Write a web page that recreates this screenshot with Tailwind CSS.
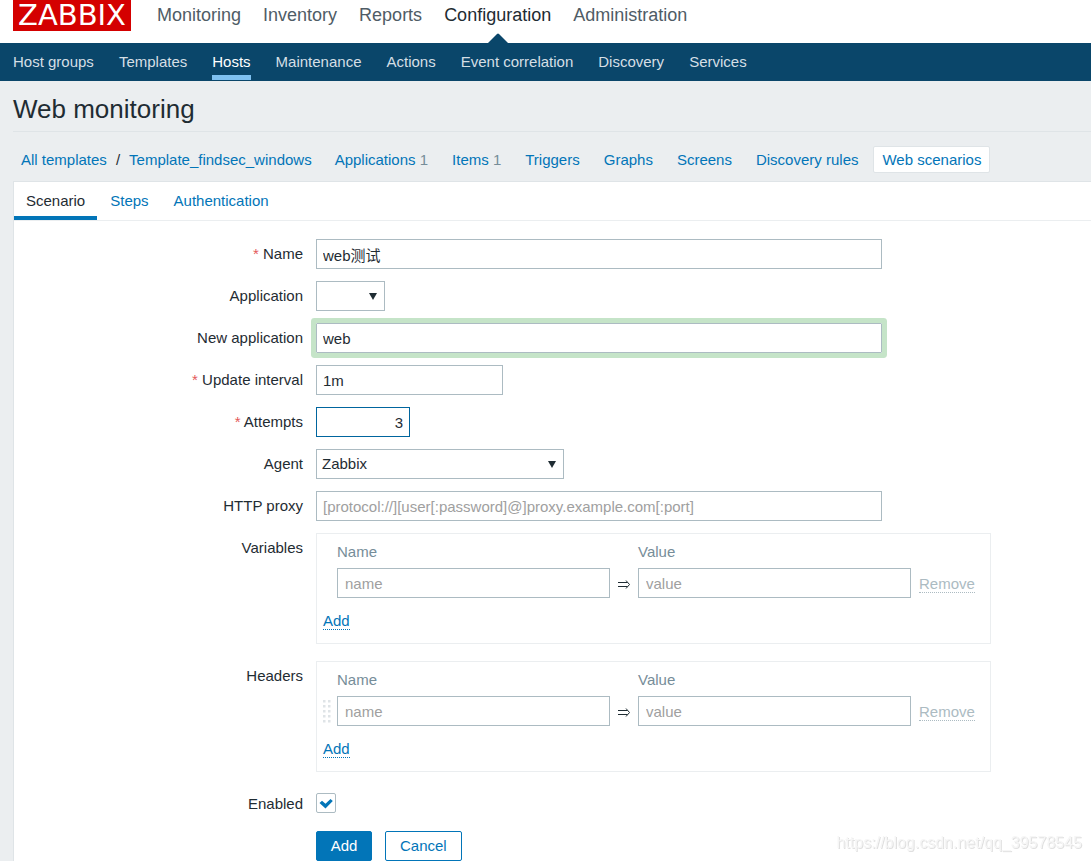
<!DOCTYPE html>
<html lang="en">
<head>
<meta charset="utf-8">
<meta name="viewport" content="width=device-width, initial-scale=1">
<title>Web monitoring</title>
<script src="https://cdn.jsdelivr.net/npm/@tailwindcss/browser@4"></script>
</head>
<body class="flex min-h-screen flex-col bg-[#ebeef0] font-['Liberation_Sans','Noto_Sans_CJK_SC',sans-serif] text-[15px] leading-[18px] text-[#1f2c33]">

<header>
  <div class="flex h-[43px] items-start bg-white pl-[13px]">
    <a href="#" class="flex h-[31px] w-[118px] items-center justify-center bg-[#d40000] font-['DejaVu_Sans',sans-serif] text-[29px] leading-[31px] text-white">ZABBIX</a>
    <nav aria-label="Main" class="ml-[26px] flex h-full gap-[22px] pt-1 text-[18px] leading-[22px] text-[#4f5c66]">
      <a href="#">Monitoring</a>
      <a href="#">Inventory</a>
      <a href="#">Reports</a>
      <a href="#" aria-current="page" class="relative text-[#1f2c33]">Configuration
        <svg class="absolute bottom-0 left-1/2 h-[10px] w-5 -translate-x-1/2" viewBox="0 0 20 10" aria-hidden="true"><path d="M0 10 9 1Q10 0 11 1L20 10Z" fill="#0a466a"/></svg>
      </a>
      <a href="#">Administration</a>
    </nav>
  </div>
  <nav aria-label="Configuration" class="flex h-[38px] items-stretch gap-[25px] bg-[#0a466a] px-[13px] leading-[38px] text-[#d5dfe5]">
    <a href="#">Host groups</a>
    <a href="#">Templates</a>
    <a href="#" aria-current="page" class="relative text-white">Hosts<span class="absolute inset-x-0 bottom-[1px] h-[5px] bg-[#7ec1f1]"></span></a>
    <a href="#">Maintenance</a>
    <a href="#">Actions</a>
    <a href="#">Event correlation</a>
    <a href="#">Discovery</a>
    <a href="#">Services</a>
  </nav>
</header>

<main class="flex grow flex-col pl-[13px]">
  <h1 class="border-b border-[#dfe4e7] pt-3 pb-[6px] text-[26px] leading-[32px]">Web monitoring</h1>

  <nav aria-label="Template" class="mt-[14px] mb-2 flex items-center gap-[6px] leading-[19px] text-[#0275b8]">
    <a href="#" class="pl-2">All templates</a>
    <span class="px-[3px] text-[#1f2c33]">/</span>
    <a href="#" class="pr-2">Template_findsec_windows</a>
    <a href="#" class="px-[9px]">Applications <span class="text-[#768d99]">1</span></a>
    <a href="#" class="px-[9px]">Items <span class="text-[#768d99]">1</span></a>
    <a href="#" class="px-[9px]">Triggers</a>
    <a href="#" class="px-[9px]">Graphs</a>
    <a href="#" class="px-[9px]">Screens</a>
    <a href="#" class="px-[9px]">Discovery rules</a>
    <a href="#" aria-current="page" class="rounded-xs border border-[#dfe4e7] bg-white px-2 py-[3px]">Web scenarios</a>
  </nav>

  <section class="grow border-t border-l border-[#dfe4e7] bg-white">
    <div role="tablist" class="flex h-[39px] gap-px border-b border-[#ebeef0] text-[#0275b8]">
      <button type="button" role="tab" aria-selected="true" class="border-b-4 border-[#0275b8] px-3 pt-1 text-[#1f2c33]">Scenario</button>
      <button type="button" role="tab" aria-selected="false" class="border-b-4 border-transparent px-3 pt-1">Steps</button>
      <button type="button" role="tab" aria-selected="false" class="border-b-4 border-transparent px-3 pt-1">Authentication</button>
    </div>

    <form class="grid grid-cols-[289px_1fr] gap-x-[13px] gap-y-3 pt-[18px]">
      <label for="name" class="text-right leading-[30px]"><span class="text-[#e45959]">*</span> Name</label>
      <div><input id="name" type="text" value="web测试" class="block h-[30px] w-full max-w-[566px] border border-[#acbbc2] px-[6px]"></div>

      <label for="application" class="text-right leading-[30px]">Application</label>
      <div class="relative w-[69px]">
        <select id="application" class="block h-[30px] w-full appearance-none border border-[#acbbc2] bg-white px-[5px]"><option></option></select>
        <svg class="pointer-events-none absolute top-3 right-2 h-[7px] w-2" viewBox="0 0 8 7" aria-hidden="true"><path d="M0 0H8L4 7Z" fill="#1f2c33"/></svg>
      </div>

      <label for="new-application" class="text-right leading-[30px]">New application</label>
      <div><input id="new-application" type="text" value="web" class="block h-[30px] w-full max-w-[566px] rounded-[1px] border border-[#acbbc2] px-[6px] shadow-[0_0_0_5px_#c5e4c8]"></div>

      <label for="interval" class="text-right leading-[30px]"><span class="text-[#e45959]">*</span> Update interval</label>
      <div><input id="interval" type="text" value="1m" class="block h-[30px] w-[187px] border border-[#acbbc2] px-[6px]"></div>

      <label for="attempts" class="text-right leading-[30px]"><span class="text-[#e45959]">*</span> Attempts</label>
      <div><input id="attempts" type="text" value="3" class="block h-[30px] w-[94px] border border-[#00659e] px-[6px] text-right"></div>

      <label for="agent" class="text-right leading-[30px]">Agent</label>
      <div class="relative w-[248px]">
        <select id="agent" class="block h-[30px] w-full appearance-none border border-[#acbbc2] bg-white px-[5px]"><option>Zabbix</option></select>
        <svg class="pointer-events-none absolute top-3 right-2 h-[7px] w-2" viewBox="0 0 8 7" aria-hidden="true"><path d="M0 0H8L4 7Z" fill="#1f2c33"/></svg>
      </div>

      <label for="proxy" class="text-right leading-[30px]">HTTP proxy</label>
      <div><input id="proxy" type="text" placeholder="[protocol://][user[:password]@]proxy.example.com[:port]" class="block h-[30px] w-full max-w-[566px] border border-[#acbbc2] px-[6px] placeholder:text-[#a0a0a0]"></div>

      <div id="variables" class="text-right leading-[30px]">Variables</div>
      <div class="mb-[5px] w-[675px] border border-[#ebeef0] px-[5px] pt-[6px] pb-[13px]">
        <table aria-labelledby="variables" class="border-collapse">
          <thead>
            <tr class="text-left text-[#768d99]">
              <td class="w-[15px]"></td>
              <th class="pb-1 font-normal leading-6">Name</th>
              <td class="w-7"></td>
              <th class="pb-1 font-normal leading-6">Value</th>
              <td></td>
            </tr>
          </thead>
          <tbody>
            <tr>
              <td></td>
              <td><input type="text" aria-label="Variable name" placeholder="name" class="block h-[30px] w-[273px] border border-[#acbbc2] px-[7px] placeholder:text-[#a0a0a0]"></td>
              <td>
                <svg class="mx-auto mt-[2px] h-[9px] w-3" viewBox="0 0 12 9" fill="none" stroke="#1f2c33" aria-hidden="true"><path d="M0 2.500H9.500M0 6.500H9.500"/><path d="M8 .5 11.500 4.500 8 8.500"/></svg>
              </td>
              <td><input type="text" aria-label="Variable value" placeholder="value" class="block h-[30px] w-[273px] border border-[#acbbc2] px-[7px] placeholder:text-[#a0a0a0]"></td>
              <td class="pl-2"><button type="button" disabled class="mt-[2px] block border-b border-dotted border-[#acbbc2] leading-[17px] text-[#acbbc2]">Remove</button></td>
            </tr>
          </tbody>
        </table>
        <button type="button" class="mt-[14px] ml-[1px] block border-b border-dotted border-[#0275b8] leading-[17px] text-[#0275b8]">Add</button>
      </div>

      <div id="headers" class="text-right leading-[30px]">Headers</div>
      <div class="mb-[5px] w-[675px] border border-[#ebeef0] px-[5px] pt-[6px] pb-[13px]">
        <table aria-labelledby="headers" class="border-collapse">
          <thead>
            <tr class="text-left text-[#768d99]">
              <td class="w-[15px]"></td>
              <th class="pb-1 font-normal leading-6">Name</th>
              <td class="w-7"></td>
              <th class="pb-1 font-normal leading-6">Value</th>
              <td></td>
            </tr>
          </thead>
          <tbody>
            <tr>
              <td>
                <svg class="h-[23px] w-[9px]" viewBox="0 0 9 23" fill="#dfe4e7" aria-hidden="true"><path d="M1 0h2.500v2.500H1zM6 0h2.500v2.500H6zM1 5h2.500v2.500H1zM6 5h2.500v2.500H6zM1 10h2.500v2.500H1zM6 10h2.500v2.500H6zM1 15h2.500v2.500H1zM6 15h2.500v2.500H6zM1 20h2.500v2.500H1zM6 20h2.500v2.500H6z"/></svg>
              </td>
              <td><input type="text" aria-label="Header name" placeholder="name" class="block h-[30px] w-[273px] border border-[#acbbc2] px-[7px] placeholder:text-[#a0a0a0]"></td>
              <td>
                <svg class="mx-auto mt-[2px] h-[9px] w-3" viewBox="0 0 12 9" fill="none" stroke="#1f2c33" aria-hidden="true"><path d="M0 2.500H9.500M0 6.500H9.500"/><path d="M8 .5 11.500 4.500 8 8.500"/></svg>
              </td>
              <td><input type="text" aria-label="Header value" placeholder="value" class="block h-[30px] w-[273px] border border-[#acbbc2] px-[7px] placeholder:text-[#a0a0a0]"></td>
              <td class="pl-2"><button type="button" disabled class="mt-[2px] block border-b border-dotted border-[#acbbc2] leading-[17px] text-[#acbbc2]">Remove</button></td>
            </tr>
          </tbody>
        </table>
        <button type="button" class="mt-[14px] ml-[1px] block border-b border-dotted border-[#0275b8] leading-[17px] text-[#0275b8]">Add</button>
      </div>

      <label for="enabled" class="text-right leading-[30px]">Enabled</label>
      <div class="grid h-7 w-5 items-center">
        <input id="enabled" type="checkbox" checked class="peer col-start-1 row-start-1 size-5 appearance-none rounded-xs border border-[#acbbc2] bg-white">
        <svg class="pointer-events-none col-start-1 row-start-1 hidden size-5 peer-checked:block" viewBox="0 0 20 20" aria-hidden="true"><path d="M3.500 10 6 7.800 9.500 10.800 14.500 6 16.800 8 9.500 15.500Z" fill="#0275b8"/></svg>
      </div>

      <div class="col-start-2 flex gap-[13px]">
        <button type="submit" class="h-[30px] w-14 rounded-xs border border-[#0275b8] bg-[#0275b8] text-white">Add</button>
        <button type="button" class="h-[30px] rounded-xs border border-[#0275b8] bg-white px-[14px] text-[#0275b8]">Cancel</button>
      </div>
    </form>
  </section>
</main>

<div class="pointer-events-none fixed right-[9px] bottom-2 text-[16px] leading-5 text-[#f6f6f6] [text-shadow:1px_1px_0_#e0e0e0]">https://blog.csdn.net/qq_39578545</div>
</body>
</html>
